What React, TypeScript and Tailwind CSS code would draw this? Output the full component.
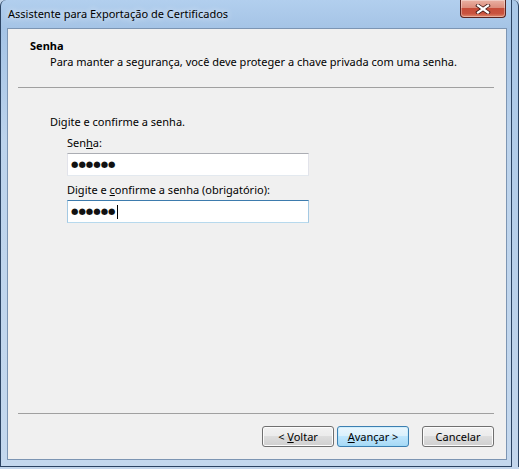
const font = { fontFamily: '"Noto Sans", "Liberation Sans", sans-serif' };

function CloseButton() {
  return (
    <div className="w-[46px] h-[18px] rounded-b-[4px] border border-t-0 border-[#5a2420] bg-[linear-gradient(to_bottom,#eab1a3_0%,#dc8d7c_45%,#c64d39_50%,#c9533f_80%,#e08a6e_100%)] shadow-[inset_0_0_0_1px_rgba(255,255,255,0.35)] flex items-center justify-center">
      <svg width="16" height="10" viewBox="0 0 16 10">
        <path d="M3 1.5 L13 8.5 M13 1.5 L3 8.5" stroke="#3b1512" strokeWidth="3.8" strokeLinecap="square" />
        <path d="M3 1.5 L13 8.5 M13 1.5 L3 8.5" stroke="#ffffff" strokeWidth="2.2" strokeLinecap="square" />
      </svg>
    </div>
  );
}

function Field({ focused, caret }: { focused?: boolean; caret?: boolean }) {
  return (
    <div
      className={
        'w-[242px] h-[23px] bg-white border flex items-center pl-[3px] ' +
        (focused
          ? 'border-[#a4c9e3] border-t-[#3d7bad] border-b-[#b7d9ed]'
          : 'border-[#e2e3ea] border-t-[#abadb3] border-b-[#e3e9ef]')
      }
    >
      <span className="text-[8.5px] leading-none text-[#111]" style={{ fontFamily: '"DejaVu Sans", sans-serif' }}>
        ●●●●●●
      </span>
      {caret && <span className="w-px h-[14px] bg-black ml-[1px]" />}
    </div>
  );
}

function WinButton({ children, primary, className = '' }: { children: React.ReactNode; primary?: boolean; className?: string }) {
  return (
    <div
      className={
        'w-[72px] h-[21px] rounded-[3px] border flex items-center justify-center text-[11px] leading-none text-black ' +
        (primary
          ? 'border-[#3c7fb1] bg-[linear-gradient(to_bottom,#eaf6fd_0%,#d9f0fc_50%,#bee6fd_50%,#a7d9f5_100%)] shadow-[inset_0_0_0_1px_#8ddcfc44] '
          : 'border-[#707070] bg-[linear-gradient(to_bottom,#f2f2f2_0%,#ebebeb_50%,#dddddd_50%,#cfcfcf_100%)] shadow-[inset_0_0_0_1px_#fcfcfc] ') +
        className
      }
    >
      <span>{children}</span>
    </div>
  );
}

export default function App() {
  return (
    <div className="w-[519px] h-[469px] overflow-hidden flex bg-[#c3d6ec]" style={font}>
      <div className="w-[512px] h-[467px] flex flex-col border-x border-b border-[#2c4463] rounded-tl-[6px] bg-[linear-gradient(to_bottom,#b2cfee_0%,#a5c4e6_6%,#bcd3ec_30%,#c4d8ee_100%)]">
        <div className="h-[28px] flex items-start justify-between pl-[7px] pr-[5px]">
          <span className="mt-[6px] text-[11px] leading-[16px] text-black [text-shadow:0_0_6px_rgba(255,255,255,0.95)]">
            Assistente para Exportação de Certificados
          </span>
          <CloseButton />
        </div>
        <div className="ml-[6px] w-[500px] h-[432px] border border-[#7c95b3] bg-[#f0f0f0] flex flex-col text-[11px] leading-[16px] text-black">
          <div className="pt-[9px] pl-[22px]">
            <div className="font-bold">Senha</div>
            <div className="pl-[20px]">Para manter a segurança, você deve proteger a chave privada com uma senha.</div>
          </div>
          <div className="mt-[17px] ml-[10px] w-[476px] h-px bg-[#a0a0a0]" />
          <div className="mt-[26px] pl-[42px]">Digite e confirme a senha.</div>
          <div className="pl-[59px] flex flex-col">
            <div className="mt-[5px]">
              Sen<span className="underline">h</span>a:
            </div>
            <div className="mt-[2px]">
              <Field />
            </div>
            <div className="mt-[6px]">
              Digite e <span className="underline">c</span>onfirme a senha (obrigatório):
            </div>
            <div className="mt-[2px]">
              <Field focused caret />
            </div>
          </div>
          <div className="flex-1" />
          <div className="ml-[10px] w-[476px] h-px bg-[#a0a0a0]" />
          <div className="mt-[12px] mb-[12px] pr-[12px] flex justify-end">
            <WinButton>
              &lt; <span className="underline">V</span>oltar
            </WinButton>
            <WinButton primary className="ml-[3px]">
              <span className="underline">A</span>vançar &gt;
            </WinButton>
            <WinButton className="ml-[13px]">Cancelar</WinButton>
          </div>
        </div>
      </div>
      <div className="flex-1 h-[467px] border-r border-[#2c4463] rounded-tr-[6px] bg-[linear-gradient(to_bottom,#a9c7e7,#c3d6ec)]" />
    </div>
  );
}
